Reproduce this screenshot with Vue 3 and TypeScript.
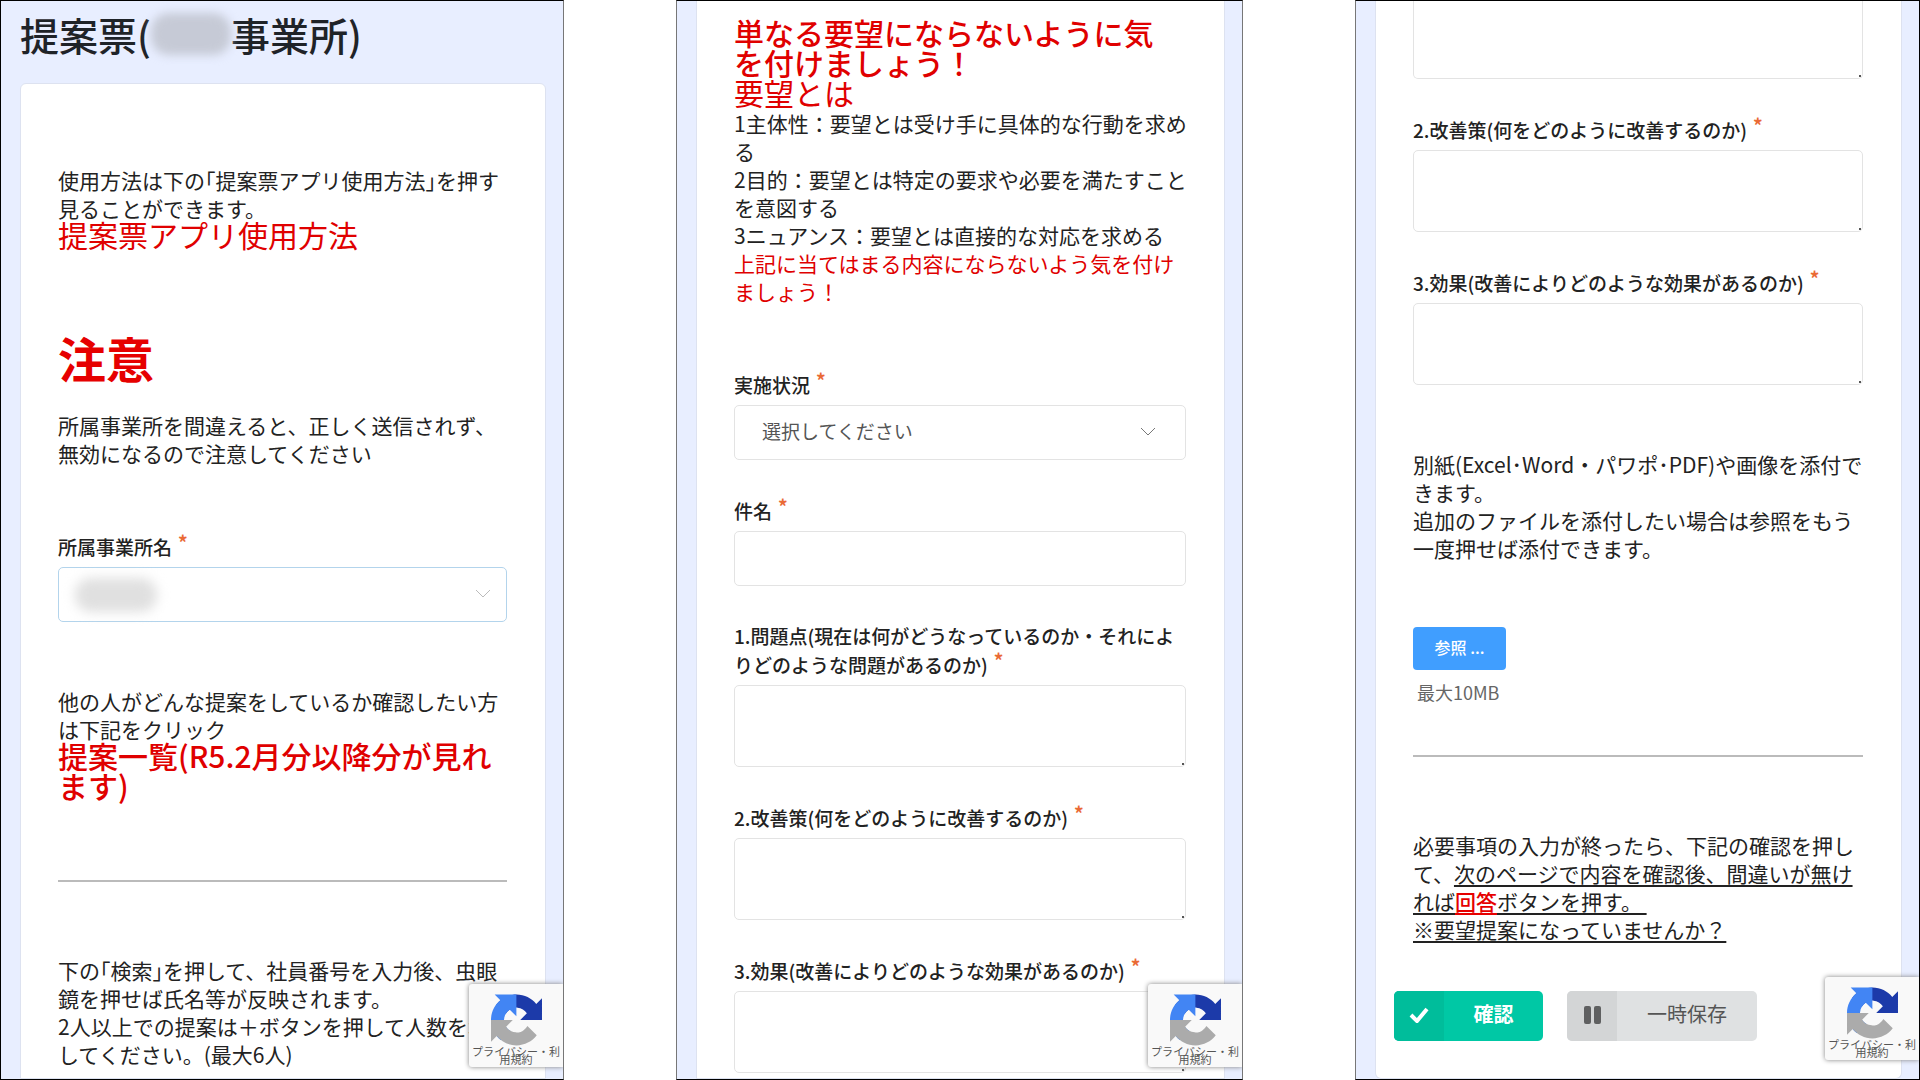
<script setup lang="ts">
import { ref } from 'vue'

const office = ref('')
const status = ref('')
const subject = ref('')

interface Question {
  id: string
  lines: string[]
}

const problem: Question = {
  id: 'problem',
  lines: ['1.問題点(現在は何がどうなっているのか・それによ', 'りどのような問題があるのか)'],
}
const measure: Question = { id: 'measure', lines: ['2.改善策(何をどのように改善するのか)'] }
const effect: Question = { id: 'effect', lines: ['3.効果(改善によりどのような効果があるのか)'] }

const middleQuestions: Question[] = [problem, measure, effect]
const lastQuestions: Question[] = [measure, effect]
const screens = ['first', 'middle', 'last']
</script>

<template>
  <main class="screens">
    <section v-for="name in screens" :key="name" class="screen" :class="name">
      <template v-if="name === 'first'">
        <h1 class="title">
          提案票(<span class="redacted"></span>事業所)
        </h1>
        <div class="card intro">
          <p class="text">使用方法は下の｢提案票アプリ使用方法｣を押す<br />見ることができます。</p>
          <a class="lead" href="#usage">提案票アプリ使用方法</a>
          <h2 class="caution">注意</h2>
          <p class="text">所属事業所を間違えると、正しく送信されず、<br />無効になるので注意してください</p>
          <div class="field spaced">
            <label class="label" for="office">所属事業所名<span class="required">*</span></label>
            <div class="select active">
              <select id="office" v-model="office"><option value=""></option></select>
              <span class="smudge"></span>
              <svg class="chevron" viewBox="0 0 16 10"><path d="M1 1l7 7 7-7" /></svg>
            </div>
          </div>
          <p class="text spaced">他の人がどんな提案をしているか確認したい方<br />は下記をクリック</p>
          <a class="lead strong" href="#list">提案一覧(R5.2月分以降分が見れ<br />ます)</a>
          <hr />
          <p class="text">
            下の｢検索｣を押して、社員番号を入力後、虫眼<br />鏡を押せば氏名等が反映されます。<br />2人以上での提案は＋ボタンを押して人数を増や<br />してください。(最大6人)
          </p>
        </div>
      </template>

      <template v-else-if="name === 'middle'">
        <div class="card continued">
          <p class="lead strong">単なる要望にならないように気<br />を付けましょう！</p>
          <p class="lead">要望とは</p>
          <p class="text">
            1主体性：要望とは受け手に具体的な行動を求め<br />る<br />2目的：要望とは特定の要求や必要を満たすこと<br />を意図する<br />3ニュアンス：要望とは直接的な対応を求める
          </p>
          <p class="text red">上記に当てはまる内容にならないよう気を付け<br />ましょう！</p>
          <div class="field spaced">
            <label class="label" for="status">実施状況<span class="required">*</span></label>
            <div class="select">
              <select id="status" v-model="status"><option value="">選択してください</option></select>
              <svg class="chevron" viewBox="0 0 16 10"><path d="M1 1l7 7 7-7" /></svg>
            </div>
          </div>
          <div class="field">
            <label class="label" for="subject">件名<span class="required">*</span></label>
            <input id="subject" v-model="subject" class="box" type="text" />
          </div>
          <div v-for="q in middleQuestions" :key="q.id" class="field">
            <label class="label" :for="'middle-' + q.id">
              <template v-for="(line, i) in q.lines" :key="i"><br v-if="i > 0" />{{ line }}</template><span class="required">*</span>
            </label>
            <div class="area"><textarea :id="'middle-' + q.id" class="box"></textarea></div>
          </div>
        </div>
      </template>

      <template v-else>
        <div class="card ending">
          <div class="area cut"><textarea class="box" aria-label="1.問題点"></textarea></div>
          <div v-for="q in lastQuestions" :key="q.id" class="field">
            <label class="label" :for="'last-' + q.id">{{ q.lines[0] }}<span class="required">*</span></label>
            <div class="area"><textarea :id="'last-' + q.id" class="box"></textarea></div>
          </div>
          <p class="text spaced">
            別紙(Excel･Word・パワポ･PDF)や画像を添付で<br />きます。<br />追加のファイルを添付したい場合は参照をもう<br />一度押せば添付できます。
          </p>
          <button class="browse spaced" type="button">参照 ...</button>
          <p class="limit">最大10MB</p>
          <hr class="near" />
          <p class="text">
            必要事項の入力が終ったら、下記の確認を押し<br />て、<u>次のページで内容を確認後、間違いが無け<br />れば<strong>回答</strong>ボタンを押す。&nbsp;<br />※要望提案になっていませんか？</u>
          </p>
          <div class="actions">
            <button class="action confirm" type="button">
              <span class="icon"><svg width="20" height="16" viewBox="0 0 20 16"><path d="M2 8l6 6L18 2" fill="none" stroke="#fff" stroke-width="4" /></svg></span>
              <span class="caption">確認</span>
            </button>
            <button class="action hold" type="button">
              <span class="icon"><svg width="17" height="18" viewBox="0 0 17 18" fill="#5f6061"><rect width="7" height="18" rx="2" /><rect x="10" width="7" height="18" rx="2" /></svg></span>
              <span class="caption">一時保存</span>
            </button>
          </div>
        </div>
      </template>

      <aside class="badge">
        <svg width="51" height="52" viewBox="0 0 64 64">
          <path fill="#1c3aa9" d="M64 31.955l-.033-1.37V4.687l-7.16 7.16C50.948 4.674 42.033.093 32.05.093c-10.4 0-19.622 4.96-25.458 12.64l11.736 11.86a15.55 15.55 0 0 1 4.754-5.334c2.05-1.6 4.952-2.906 8.968-2.906.485 0 .86.057 1.135.163 4.976.393 9.288 3.14 11.828 7.124l-8.307 8.307L64 31.953" />
          <path fill="#4285f4" d="M31.862.094l-1.37.033H4.594l7.16 7.16C4.58 13.147 0 22.06 0 32.046c0 10.4 4.96 19.622 12.64 25.458L24.5 45.768a15.55 15.55 0 0 1-5.334-4.754c-1.6-2.05-2.906-4.952-2.906-8.968 0-.485.057-.86.163-1.135.393-4.976 3.14-9.288 7.124-11.828l8.307 8.307L31.86.095" />
          <path fill="#ababab" d="M.001 32.045l.033 1.37v25.898l7.16-7.16c5.86 7.173 14.774 11.754 24.76 11.754 10.4 0 19.622-4.96 25.458-12.64l-11.736-11.86a15.55 15.55 0 0 1-4.754 5.334c-2.05 1.6-4.952 2.906-8.968 2.906-.485 0-.86-.057-1.135-.163-4.976-.393-9.288-3.14-11.828-7.124l8.307-8.307c-10.522.04-22.4.066-27.295-.005" />
        </svg>
        <a href="#privacy">プライバシー・利<br />用規約</a>
      </aside>
    </section>
  </main>
</template>

<style>
body {
  margin: 0;
  background: #fff;
}
</style>

<style scoped>
* {
  box-sizing: border-box;
}

.screens {
  display: grid;
  grid-template-columns: 564fr 567fr 565fr;
  column-gap: 112px;
  height: 100vh;
  color: #222;
  font-family: 'Noto Sans CJK JP', sans-serif;
}

.screen {
  position: relative;
  display: flex;
  flex-direction: column;
  min-width: 0;
  padding: 0 17px 0 19px;
  overflow: hidden;
  border: 1px solid #000;
  border-right-color: #777;
  border-left-color: #777;
  background: #e8eeff;
}

.screen.first {
  border-left-color: #000;
}

.screen.last {
  border-right-color: #000;
}

.title {
  display: flex;
  align-items: center;
  height: 58px;
  margin: 4px 0 20px;
  color: #1f2328;
  font-size: 39px;
  font-weight: 500;
  line-height: 58px;
  white-space: nowrap;
}

.redacted {
  width: 80px;
  height: 42px;
  border-radius: 18px;
  background: #c6cad6;
  filter: blur(5px);
}

.card {
  flex: 1 0 auto;
  padding: 0 38px 0 37px;
  border: 1px solid #dde2f0;
  background: #fff;
  white-space: nowrap;
}

.card.intro {
  padding-top: 82px;
  border-radius: 6px 6px 0 0;
}

.card.continued {
  padding-top: 16px;
  border-top: 0;
}

.card.ending {
  border-top: 0;
  border-radius: 0 0 6px 6px;
}

.text {
  margin: 0;
  font-size: 21px;
  line-height: 28px;
}

.lead {
  display: block;
  margin: 0;
  color: #e00000;
  font-size: 30px;
  line-height: 30px;
  text-decoration: none;
}

.text + .lead {
  margin-top: -3px;
}

.lead + .text {
  margin-top: 2px;
}

.strong {
  font-weight: 500;
}

.red {
  color: #e00000;
}

.caution {
  margin: 84px 0 30px;
  color: #e60000;
  font-size: 48px;
  font-weight: 700;
  line-height: 48px;
}

.field {
  margin-top: 36px;
}

.spaced {
  margin-top: 65px;
}

.label {
  display: block;
  margin-bottom: 6px;
  font-size: 19px;
  font-weight: 500;
  line-height: 28px;
}

.required {
  margin-left: 6px;
  color: #ea6a35;
  font-size: 19px;
  font-weight: 700;
  line-height: 19px;
  vertical-align: 5px;
}

.select {
  position: relative;
}

.select select,
.box {
  display: block;
  width: 100%;
  height: 55px;
  margin: 0;
  border: 1px solid #e3e3e3;
  border-radius: 5px;
  outline: 0;
  background: #fff;
}

.select select {
  padding: 0 27px 4px;
  appearance: none;
  color: #555;
  font-family: inherit;
  font-size: 19px;
}

.select.active select {
  border-color: #b3d4ec;
}

.chevron {
  position: absolute;
  top: 22px;
  right: 30px;
  width: 16px;
  height: 10px;
  fill: none;
  stroke: #777;
  stroke-width: 1;
}

.active .chevron {
  right: 16px;
  stroke: #bbb;
}

.smudge {
  position: absolute;
  top: 11px;
  left: 17px;
  width: 82px;
  height: 34px;
  border-radius: 16px;
  background: #e0e0e0;
  filter: blur(6px);
}

.area {
  position: relative;
}

.area .box {
  height: 82px;
  resize: none;
}

.area.cut .box {
  height: 78px;
  border-top: 0;
  border-radius: 0 0 5px 5px;
}

.area::after {
  position: absolute;
  right: 2px;
  bottom: 2px;
  width: 2px;
  height: 2px;
  background: #555;
  content: '';
}

hr {
  height: 2px;
  margin: 80px 0 74px;
  border: 0;
  background: #bbb;
}

hr.near {
  margin-top: 49px;
}

.browse {
  display: block;
  width: 93px;
  height: 43px;
  padding: 0 0 4px;
  border: 0;
  border-radius: 4px;
  background: #409eff;
  color: #fff;
  font-family: inherit;
  font-size: 16px;
  font-weight: 500;
}

.limit {
  margin: 8px 4px 0;
  color: #666;
  font-size: 18px;
  line-height: 28px;
}

u {
  text-underline-offset: 3px;
}

u strong {
  color: #e60000;
  font-weight: 500;
  text-decoration: underline;
  text-underline-offset: 3px;
}

.actions {
  display: flex;
  gap: 24px;
  margin: 48px -19px 36px;
}

.action {
  display: flex;
  align-items: stretch;
  height: 50px;
  padding: 0;
  overflow: hidden;
  border: 0;
  border-radius: 5px;
  font-family: inherit;
  font-size: 20px;
}

.action .icon {
  display: flex;
  flex: none;
  align-items: center;
  justify-content: center;
  width: 50px;
  padding-bottom: 2px;
}

.action .caption {
  flex: 1;
  line-height: 46px;
}

.confirm {
  width: 149px;
  background: #00c8a5;
  color: #fff;
  font-weight: 700;
}

.confirm .icon {
  background: #00bd9b;
}

.hold {
  width: 190px;
  background: #dfe1e2;
  color: #555;
}

.hold .icon {
  background: #d3d5d6;
}

.badge {
  position: absolute;
  right: 0;
  bottom: 12px;
  display: flex;
  flex-direction: column;
  align-items: center;
  width: 94px;
  height: 83px;
  padding-top: 10px;
  border-radius: 3px 0 0 3px;
  background: #f9f9f9;
  box-shadow: 0 0 5px #808080;
}

.last .badge {
  bottom: 19px;
}

.badge a {
  margin-top: 1px;
  color: #555;
  font-size: 11px;
  line-height: 8px;
  text-align: center;
  text-decoration: none;
  white-space: nowrap;
}
</style>
